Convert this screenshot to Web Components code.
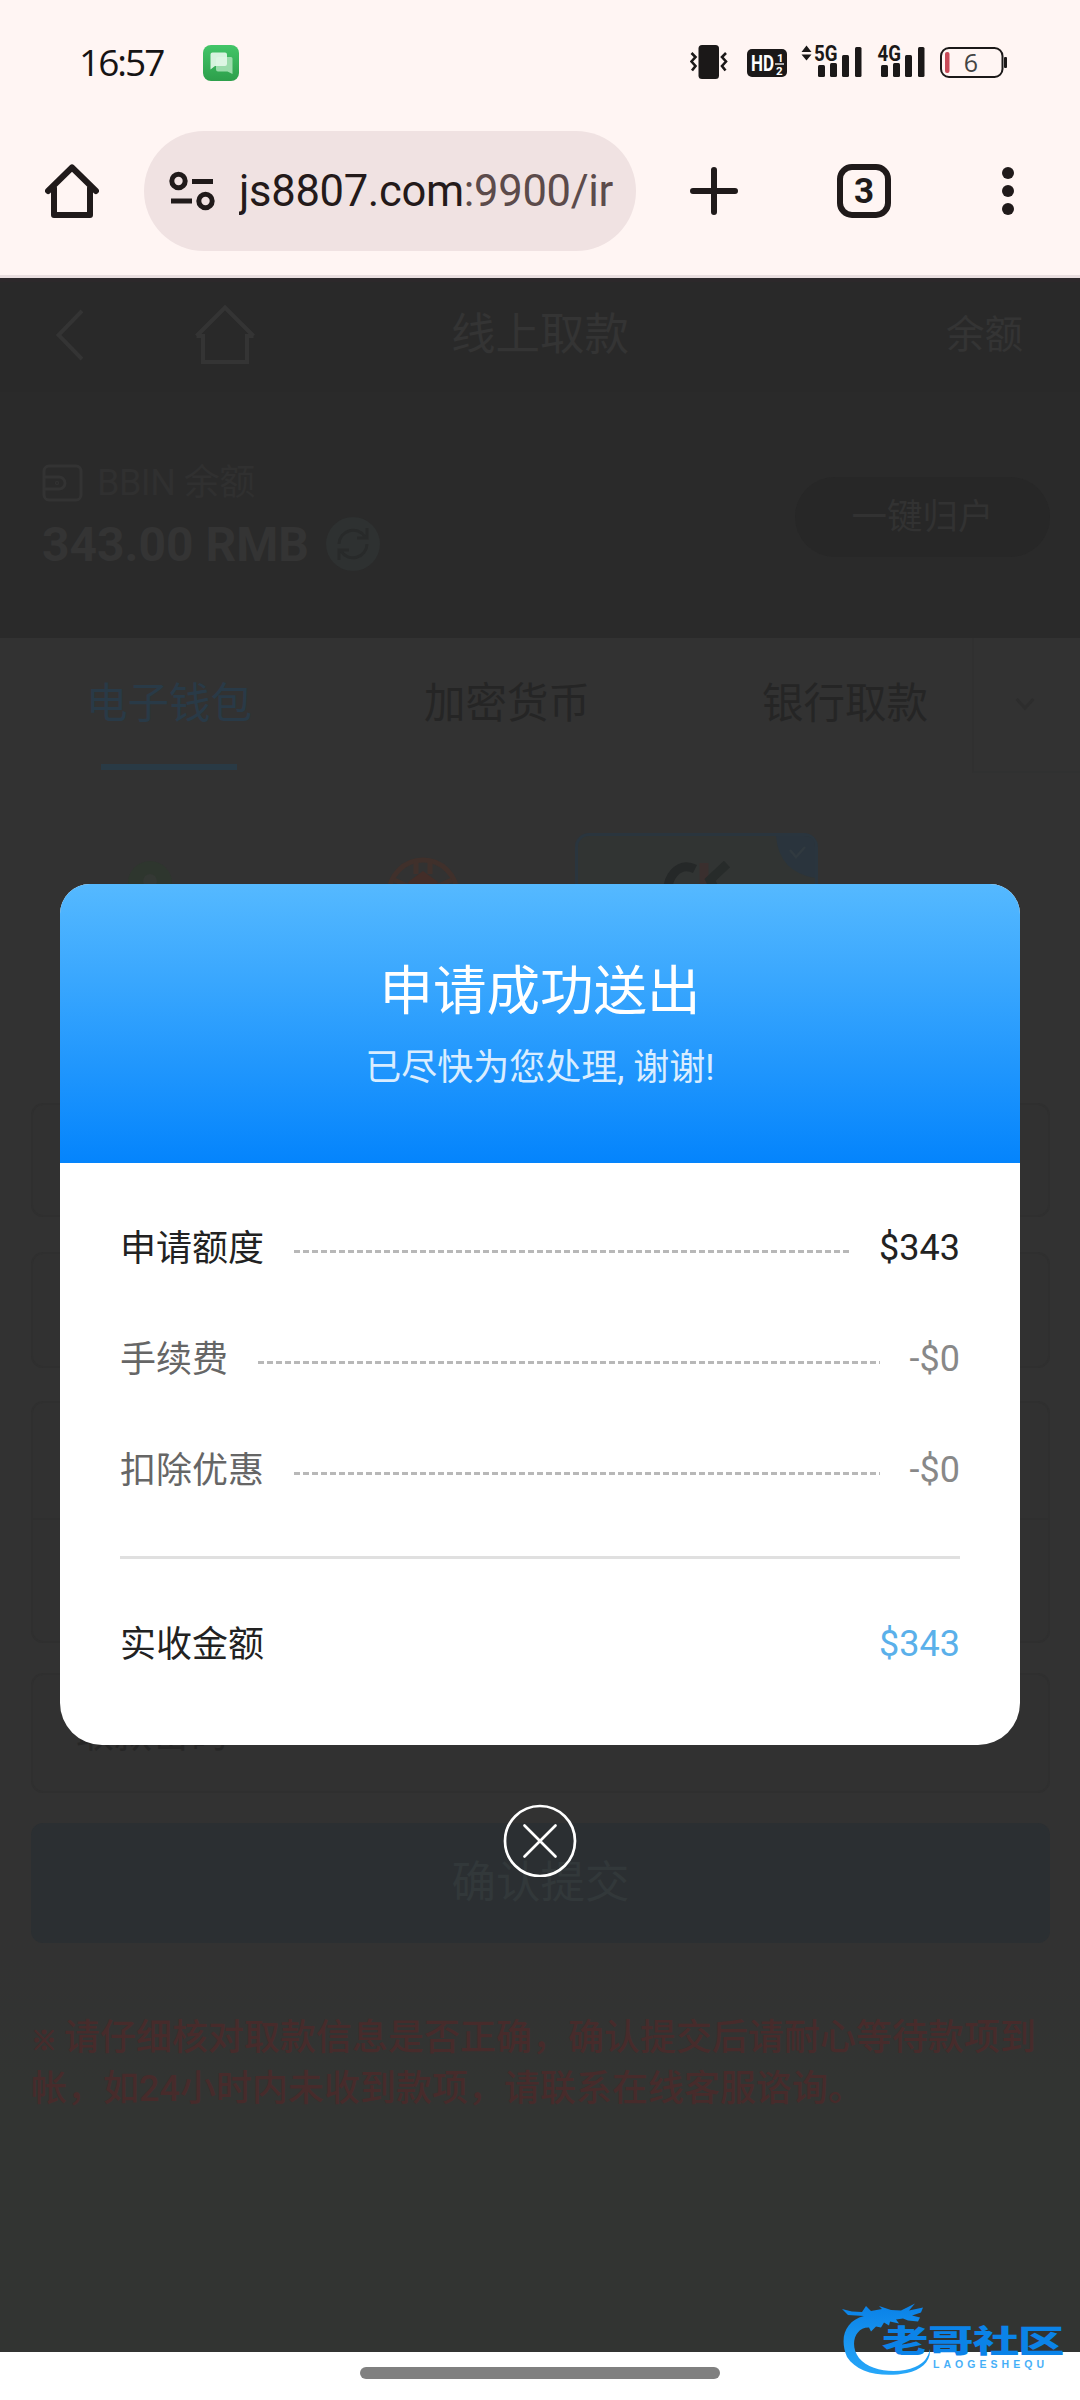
<!DOCTYPE html>
<html lang="zh-CN">
<head>
<meta charset="utf-8">
<title>线上取款</title>
<style>
html,body{margin:0;padding:0;background:#fff}
body{width:1080px;height:2400px;overflow:hidden;font-family:Roboto,"Noto Sans CJK SC",sans-serif}
</style>
</head>
<body>
<phone-screen></phone-screen>
<script>
function define(name, css, html) {
  const t = document.createElement('template');
  t.innerHTML = `<style>*{box-sizing:border-box}svg{display:block;flex:none}:host{display:block;box-sizing:border-box}${css}</style>${html}`;
  customElements.define(name, class extends HTMLElement {
    constructor() {
      super();
      this.attachShadow({mode: 'open'}).appendChild(t.content.cloneNode(true));
    }
  });
}

define('status-bar', `
:host{display:flex;justify-content:space-between;align-items:flex-start;height:120px;color:#161313}
.l{display:flex;padding:45px 0 0 79px;gap:37px;align-items:flex-start}
.t{font:400 37px/34px "Open Sans",sans-serif;letter-spacing:-2px;width:87px;white-space:nowrap}
.r{padding:40px 70px 0 0}`, `
<div class="l"><span class="t">16:57</span>
<svg width="36" height="36" viewBox="0 0 36 36"><defs><linearGradient id="g" x2="0" y2="1"><stop stop-color="#43c568"/><stop offset="1" stop-color="#2d9f4b"/></linearGradient></defs><rect width="36" height="36" rx="8" fill="url(#g)"/><path d="M15 12h13q1.500 0 1.500 1.500V29l-5-2.600H15q-2-.2-2-2V14q0-2 2-2z" fill="#9bdcab"/><path d="M9.500 7.500H22q2 0 2 2V19q0 2-2 2H12l-4.500 3.500V9.500q0-2 2-2z" fill="#e2f8e7" opacity=".93"/></svg></div>
<div class="r"><svg width="320" height="44" viewBox="690 40 320 44" font-family="Roboto,sans-serif">
<rect x="698.500" y="45" width="20.500" height="34" rx="3.500" fill="#1b1818"/>
<g fill="none" stroke="#1b1818" stroke-width="2.600"><path d="M691.500 53l4 4-4 4.500 4 4.500-3.500 4.500M726 53l-4 4 4 4.500-4 4.500 3.500 4.500"/></g>
<rect x="747" y="49" width="40" height="28" rx="5" fill="#1b1818"/>
<text x="751" y="71" font-size="22" font-weight="700" fill="#fff" textLength="23" lengthAdjust="spacingAndGlyphs">HD</text>
<text x="777" y="61.500" font-size="11.500" font-weight="700" fill="#fff">1</text><text x="776" y="75" font-size="11.500" font-weight="700" fill="#fff">2</text><path d="M775 64h9" stroke="#fff" stroke-width="1.300"/>
<g fill="#1b1818"><path d="M801.500 52l5-6.500 5 6.500zM801.500 54.500h10l-5 6z"/>
<text x="814" y="61" font-size="21.500" font-weight="700" textLength="23.500" lengthAdjust="spacingAndGlyphs">5G</text>
<rect x="818" y="65" width="7" height="12" rx="1.500"/><rect x="830" y="63" width="7" height="14" rx="1.500"/><rect x="842" y="55" width="7" height="22" rx="1.500"/><rect x="855" y="47" width="6.500" height="30" rx="1.500"/>
<text x="877.500" y="61" font-size="21.500" font-weight="700" textLength="23.500" lengthAdjust="spacingAndGlyphs">4G</text>
<rect x="881" y="65" width="7" height="12" rx="1.500"/><rect x="893" y="63" width="7" height="14" rx="1.500"/><rect x="905" y="55" width="7" height="22" rx="1.500"/><rect x="918" y="47" width="6.500" height="30" rx="1.500"/>
<rect x="1004" y="57" width="3" height="11" rx="1"/></g>
<rect x="941" y="48" width="61.500" height="29" rx="8" fill="none" stroke="#1b1818" stroke-width="2"/>
<rect x="945" y="52" width="4.500" height="21" rx="2" fill="#c84a58"/>
<text x="971" y="71.500" font-size="25" text-anchor="middle" fill="#444" font-family="Open Sans,sans-serif">6</text>
</svg></div>`);

define('browser-toolbar', `
:host{display:flex;align-items:center;height:158px;border-bottom:3px solid #e9dedf;padding:0 0 13px 45px;color:#201a1a}
.pill{display:flex;align-items:center;width:492px;height:120px;margin-left:45px;border-radius:60px;background:#f0e2e2;padding-left:25px;gap:24px}
.url{font:400 43.500px/60px Roboto,sans-serif;letter-spacing:-.3px;width:378px;padding-top:1px;white-space:nowrap;overflow:hidden;color:#5c4b4b}
.url b{font-weight:400;color:#241a1a}
.plus{margin-left:54px}.tab{margin-left:99px;width:54px;height:54px;border:6px solid #201a1a;border-radius:15px;font:700 35px/43px Roboto,sans-serif;text-align:center}
.dots{margin-left:111px}`, `
<svg width="54" height="54" viewBox="0 0 54 54" fill="none" stroke="#201a1a" stroke-width="6" stroke-linecap="round" stroke-linejoin="round"><path d="M3 27L27 3.500 51 27M9 24v27h36V24"/></svg>
<div class="pill"><svg width="46" height="40" viewBox="0 0 46 40" fill="none" stroke="#201a1a" stroke-width="5"><circle cx="9.500" cy="10" r="6.700"/><path d="M23 10.500h21M2 30h21"/><circle cx="36.500" cy="30" r="6.700"/></svg><span class="url"><b>js8807.com</b>:9900/ir</span></div>
<svg class="plus" width="48" height="48" viewBox="0 0 48 48" stroke="#201a1a" stroke-width="6" stroke-linecap="round"><path d="M3 24h42M24 3v42"/></svg>
<div class="tab">3</div>
<svg class="dots" width="12" height="48" viewBox="0 0 12 48" fill="#201a1a"><circle cx="6" cy="6" r="6"/><circle cx="6" cy="24" r="6"/><circle cx="6" cy="42" r="6"/></svg>`);

define('site-header', `
:host{display:grid;grid-template-columns:1fr auto 1fr;align-items:center;height:114px;background:#292929;color:#343434;border-top:4px solid #2c282a;padding-bottom:4px}
.i{display:flex;align-items:center;padding-left:56px;gap:112px}
h1{margin:0;font-size:44.500px;line-height:60px;font-weight:400}
.b{justify-self:end;padding-right:57px;font-size:38.500px;line-height:56px}`, `
<div class="i"><svg width="27" height="52" viewBox="0 0 27 52" fill="none" stroke="#343434" stroke-width="4"><path d="M26 2L2.500 26 26 50"/></svg>
<svg width="60" height="60" viewBox="0 0 60 60" fill="none" stroke="#343434" stroke-width="4"><path d="M1.500 31L30 2.500 58.500 31M1.500 31H8v26h44V31h6.500"/></svg></div>
<h1>线上取款</h1><span class="b">余额</span>`);

define('balance-panel', `
:host{display:flex;justify-content:space-between;height:246px;background:#2a2a2a;color:#303030;padding:65px 30px 0 42px}
.n{display:flex;align-items:center;gap:14px;font-size:36px;line-height:52px}.n span{letter-spacing:-.5px}
.m{display:flex;align-items:center;gap:17px;height:70px;font-size:48px;font-weight:700;color:#343434;white-space:nowrap}
.k{width:255px;height:80px;margin-top:20px;border-radius:40px;background:#272727;font-size:35.500px;line-height:80px;text-align:center;color:#323232}`, `
<div><div class="n"><svg width="41" height="38" viewBox="0 0 41 38" fill="none" stroke="#333" stroke-width="3"><rect x="2" y="2" width="37" height="34" rx="5"/><path d="M2 13h15a6 6 0 0 1 0 12H2"/><circle cx="15" cy="19" r=".6"/></svg><span>BBIN 余额</span></div>
<div class="m"><span>343.00 RMB</span><svg width="54" height="54" viewBox="0 0 54 54" fill="none" stroke="#282a2a" stroke-width="3"><circle cx="27" cy="27" r="27" fill="#2e3131" stroke="none"/><path d="M13 27a14 14 0 0 1 26-7M41 11v10H31M41 27a14 14 0 0 1-26 7M13 43V33h10"/></svg></div></div>
<div class="k">一键归户</div>`);

define('pay-tab', `
:host{display:flex;flex-direction:column;align-items:center;width:338px;height:135px;padding-top:36px;color:#252525;font-size:41.500px;line-height:60px}
i{width:136px;height:6px;margin-top:30px}
:host([active]){color:#293a47}:host([active]) i{background:#293a45}`, `<slot></slot><i></i>`);

define('tab-strip', `
:host{display:flex;justify-content:space-between;height:135px}
.t{display:flex;width:972px;overflow:hidden}pay-tab{flex:none}
.m{width:108px;border-left:2px solid #303030;border-bottom:2px solid #303131;display:flex;align-items:center;justify-content:center;padding-right:5px}`, `
<div class="t"><pay-tab active>电子钱包</pay-tab><pay-tab>加密货币</pay-tab><pay-tab>银行取款</pay-tab></div>
<div class="m"><svg width="20" height="15" viewBox="0 0 20 15" fill="none" stroke="#2d2d2d" stroke-width="3"><path d="M1.500 2l8.500 9 8.500-9"/></svg></div>`);

define('wallet-row', `
:host{display:flex;height:330px;padding:60px 29px 0}
div{width:241px;height:200px;margin-right:32px;border-radius:14px;display:flex;justify-content:center}
.s{width:243px;border:3px solid #2a353e;background:#313433;position:relative}
.c{position:absolute;right:0;top:0}`, `
<div><svg width="46" height="46" viewBox="0 0 46 46" style="margin-top:27px"><circle cx="23" cy="23" r="22" fill="#2e362e"/><circle cx="23" cy="21" r="7" fill="#343834"/></svg></div>
<div><svg width="74" height="74" viewBox="0 0 74 74" style="margin-top:24px" fill="none" stroke="#40302b" stroke-width="5"><circle cx="37" cy="37" r="34"/><path d="M37 14l15 11-6 18H28l-6-18z" fill="#432d28" stroke="none"/><path d="M30 3v14M44 3v14M8 23l14 6M66 23l-14 6"/></svg></div>
<div class="s"><svg width="68" height="66" viewBox="0 0 68 66" fill="none" stroke-width="9" style="margin-top:25px"><path d="M32 8Q20 2 11 12T6 40" stroke="#252828"/><path d="M41 2v50" stroke="#3a2f2e"/><path d="M64 3L47 19l14 26" stroke="#272b2a"/></svg>
<svg class="c" width="39" height="42" viewBox="0 0 39 42"><path d="M0 0h28q11 0 11 11v31Q3 36 0 0z" fill="#2a343d"/><path d="M14 14l6 7 9-10" fill="none" stroke="#313a40" stroke-width="2.500"/></svg></div>`);

define('form-field', `
:host{display:block;border:2px solid #2f2f2f;border-radius:12px;background:#313131;height:var(--h);padding:0 43px;color:#262626;font-size:38px;line-height:calc(var(--h) - 2px)}
:host([split])::before{content:"";display:block;height:115px;margin:0 -43px;border-bottom:2px solid #2f2f2f}`, `<slot></slot>`);

define('notice-text', `:host{padding:71px 30px 0 31px;font-size:36px;line-height:48px;font-weight:500;color:#472b2b;white-space:nowrap}.x{font-size:26px;-webkit-text-stroke:1px #472b2b}.s{letter-spacing:-2px}`, `<span class="x">※</span><span class="s"> </span>请仔细核对取款信息是否正确，确认提交后请耐心等待款项到<br>帐，如24小时内未收到款项，请联系在线客服谘询。`);

define('detail-row', `
:host{display:flex;align-items:center;gap:30px;height:111px;font-size:36px;line-height:52px;color:#222}
.k{padding-top:3px}
:host([muted]){color:#666}:host([muted]) .v{color:#888}
i{flex:1;height:3px;margin-top:8px;background:repeating-linear-gradient(90deg,#b8b8b8 0 6px,transparent 6px 9px)}
:host([total]){height:169px}:host([total]) i{visibility:hidden}:host([total]) .v{color:#5ab0ea}`, `
<span class="k"><slot></slot></span><i></i><span class="v"><slot name="value"></slot></span>`);

define('success-dialog', `
:host{position:absolute;left:0;right:0;top:884px;display:flex;flex-direction:column;align-items:center}
.c{width:960px;height:861px;border-radius:30px 30px 42px 42px;overflow:hidden;background:#fff}
.h{height:279px;background:linear-gradient(#55b9ff,#0484fc);color:#fff;text-align:center;padding-top:68px}
h2{margin:0;font-size:53.500px;line-height:80px;font-weight:400}
p{margin:9px 0 0;font-size:36px;line-height:54px;color:#d9edff}
.b{padding:29px 60px 0}hr{border:0;height:3px;background:#e0e0e0;margin:31px 0 0}
svg{margin-top:58px}`, `
<div class="c"><div class="h"><h2>申请成功送出</h2><p>已尽快为您处理, 谢谢!</p></div>
<div class="b"><detail-row>申请额度<span slot="value">$343</span></detail-row>
<detail-row muted>手续费<span slot="value">-$0</span></detail-row>
<detail-row muted>扣除优惠<span slot="value">-$0</span></detail-row><hr>
<detail-row total>实收金额<span slot="value">$343</span></detail-row></div></div>
<svg width="74" height="74" viewBox="0 0 74 74" fill="none" stroke="#fff" stroke-width="2.700" stroke-linecap="round"><circle cx="37" cy="38" r="35"/><path d="M21.500 22.500l31 31M52.500 22.500l-31 31"/></svg>`);

define('site-watermark', `:host{position:absolute;left:840px;top:2300px}`, `
<svg width="230" height="78" viewBox="0 0 230 78"><defs><linearGradient id="w" x2="0" y2="78" gradientUnits="userSpaceOnUse"><stop offset=".1" stop-color="#0b83e8"/><stop offset="1" stop-color="#28a9fa"/></linearGradient></defs>
<g fill="url(#w)"><path d="M2 9l10 2.500 10 .5 4-6 5 5 11-2-3-3 12 4 10 .5 14-7-6 7 14-3-2 5-9 3 8 2-2 4-10-1-5-2-7 1 3 4-9-2-1 4-5-3-3 5-5-1-5 5-2-4C15 27 9 45 19 58c11 14 40 16 56 9 9-4 13-9 15-18 1 13-9 21-23 24-25 5-50 0-60-16C-1 38 5 21 24 16l-16-1z"/>
<g transform="translate(42 52) scale(1.52 1)"><text font-family="Noto Sans CJK SC,sans-serif" font-weight="900" font-size="30.500" textLength="120" lengthAdjust="spacing">老哥社区</text></g>
<text x="93" y="67.500" font-family="Liberation Sans,sans-serif" font-size="10.500" textLength="111" font-weight="700" opacity=".85">LAOGESHEQU</text></g></svg>`);

define('phone-screen', `
:host{position:relative;width:1080px;height:2400px;overflow:hidden;background:#fff}
.top{background:#fff5f3}
main{height:2074px;background:linear-gradient(#323232 1680px,#323432 1800px);overflow:hidden}
.f{display:grid;padding:0 30px 0 31px;row-gap:30px}
.go{height:120px;border-radius:12px;background:#2b2f32;color:#32383a;font-size:44.500px;line-height:121px;text-align:center}
.nav{height:48px;display:flex;justify-content:center;padding-top:15px}.nav i{width:360px;height:12px;border-radius:6px;background:#808080}`, `
<div class="top"><status-bar></status-bar><browser-toolbar></browser-toolbar></div>
<main><site-header></site-header><balance-panel></balance-panel><tab-strip></tab-strip><wallet-row></wallet-row>
<div class="f"><form-field style="--h:114px;margin-bottom:5px"></form-field><form-field style="--h:116px;margin-bottom:3px"></form-field><form-field split style="--h:242px"></form-field><form-field style="--h:120px">取款密码</form-field><div class="go">确认提交</div></div>
<notice-text></notice-text></main>
<div class="nav"><i></i></div>
<success-dialog></success-dialog><site-watermark></site-watermark>`);
</script>
</body>
</html>
